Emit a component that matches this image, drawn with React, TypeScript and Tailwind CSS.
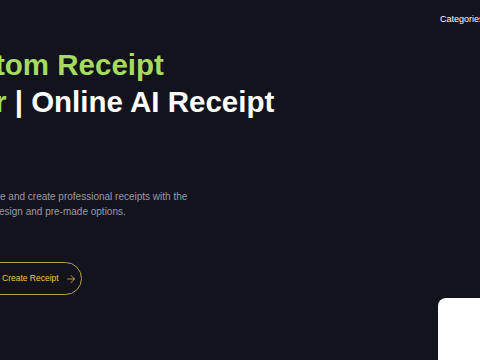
import React from "react";
import { ArrowRight } from "lucide-react";

const App: React.FC = () => {
  return (
    <div className="h-[360px] w-[480px] overflow-hidden bg-[#13131d] font-['Liberation_Sans',Arial,sans-serif]">
      {/* top nav, mostly off to the right */}
      <header className="flex h-[40px] items-center pl-[440px]">
        <nav className="flex gap-4 whitespace-nowrap text-[9px] text-white">
          <span>Categories</span>
          <span>Templates</span>
        </nav>
      </header>

      <main className="flex">
        <section className="w-[438px] shrink-0 pt-[6px]">
          <h1 className="-ml-[5px] whitespace-nowrap text-[29.5px] font-bold leading-[37px]">
            <span className="block text-[#a5dc5e]">tom Receipt</span>
            <span className="block text-white">
              <span className="text-[#a5dc5e]">r</span> | Online AI Receipt
            </span>
          </h1>

          <p className="mt-[69px] whitespace-nowrap text-[10px] leading-[15px] text-[#9a9aa3]">
            <span className="block">e and create professional receipts with the</span>
            <span className="-ml-[1px] block">esign and pre-made options.</span>
          </p>

          <button
            type="button"
            className="-ml-[40px] mt-[43px] flex h-[33px] items-center gap-[6px] rounded-full border border-[#b8a04a] pl-[41px] pr-[4px] text-[8.5px] text-[#f3c73a]"
          >
            Create Receipt
            <ArrowRight size={12} strokeWidth={1.5} />
          </button>
        </section>

        <aside className="flex-1 pt-[258px]">
          <div className="h-[100px] rounded-tl-[8px] bg-white" />
        </aside>
      </main>
    </div>
  );
};

export default App;
